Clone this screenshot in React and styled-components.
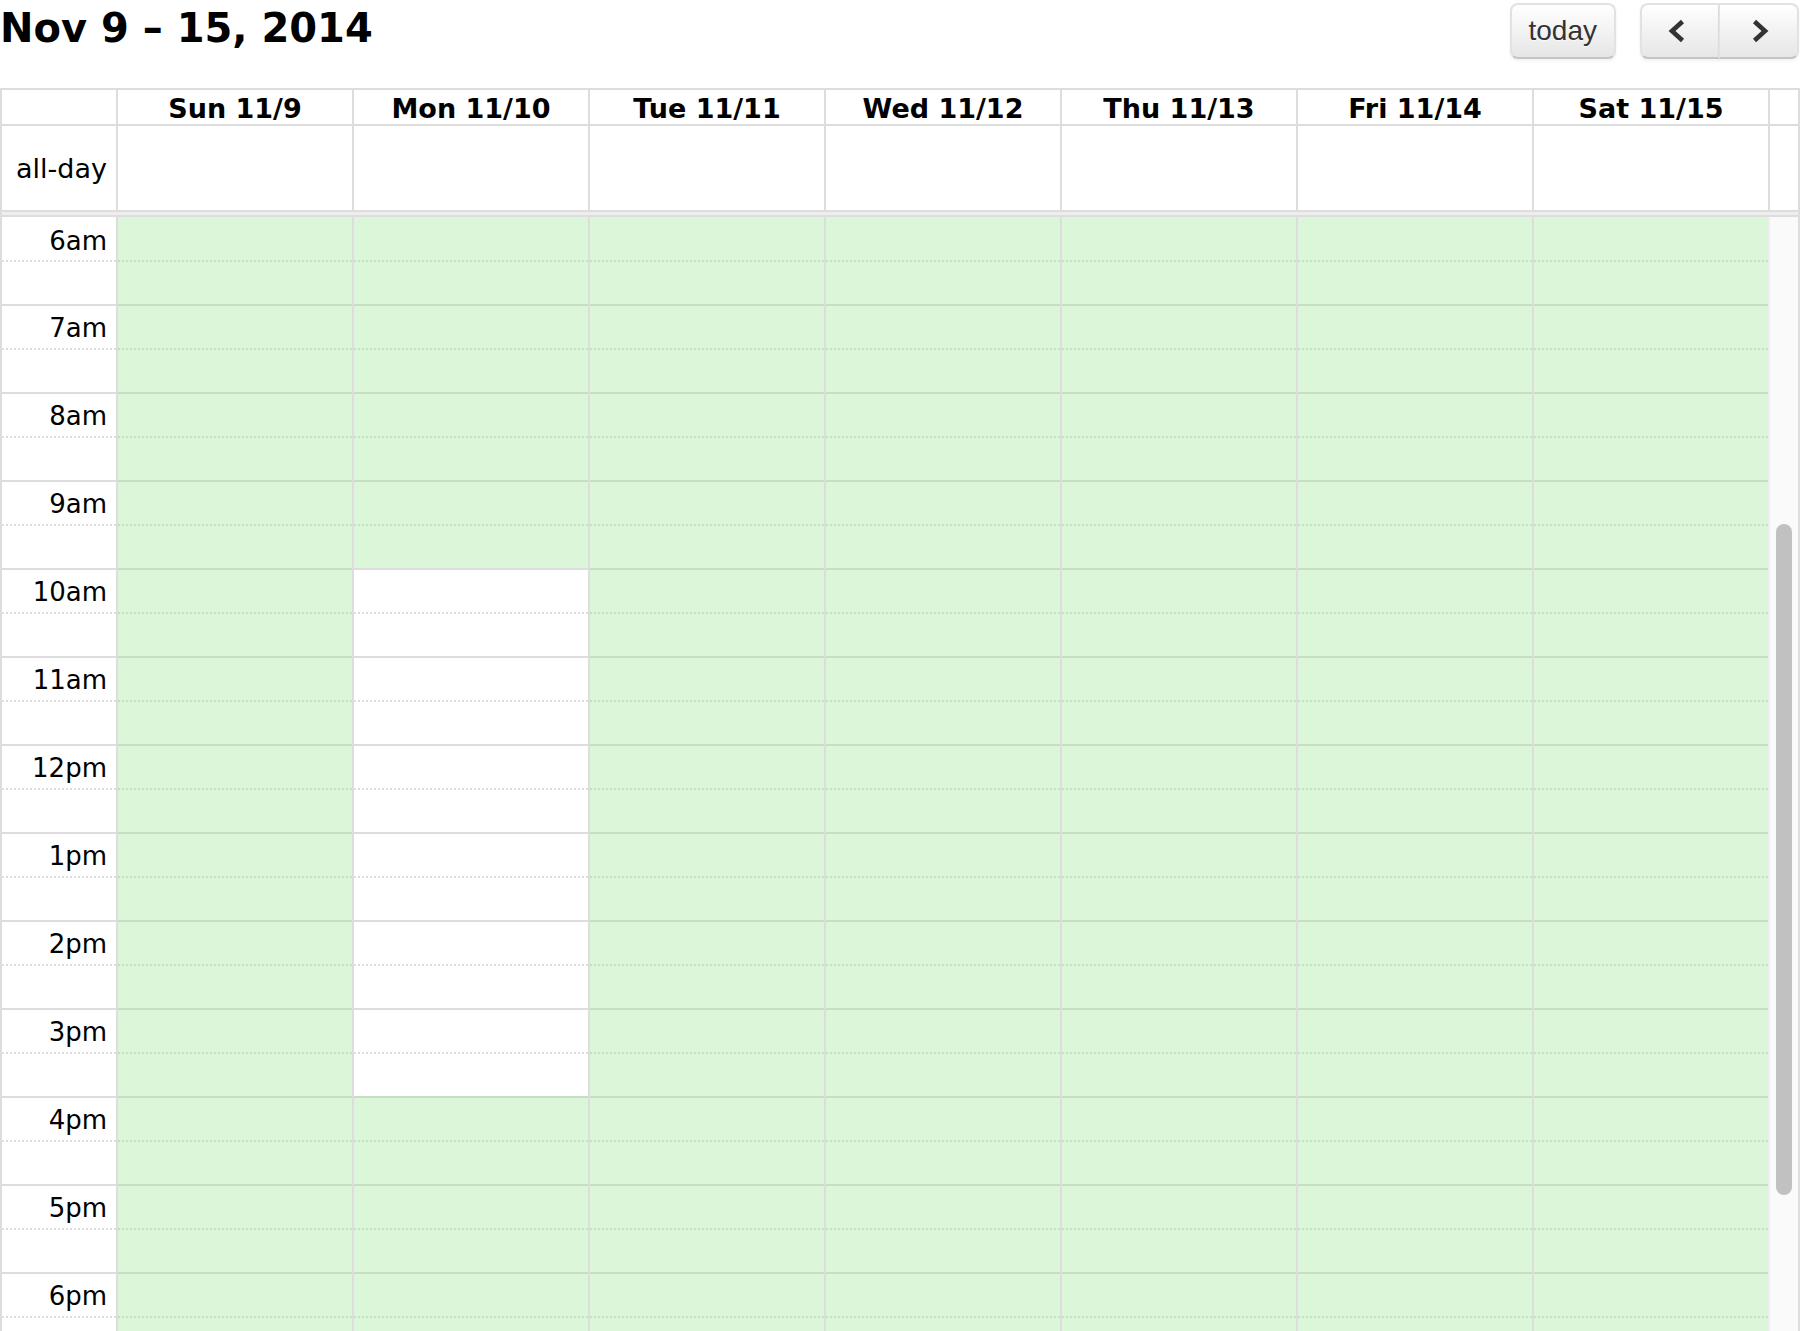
import React from "react";
import styled, { createGlobalStyle } from "styled-components";

const GlobalStyle = createGlobalStyle`
  * {
    box-sizing: border-box;
  }
  body {
    margin: 0;
    background: #fff;
    font-family: "DejaVu Sans", Verdana, sans-serif;
    color: #000;
    overflow: hidden;
  }
`;

const LINE = "#dddddd";
const GREEN = "#dcf6d9";
const GREEN_LINE = "#c6dec3";

const days = ["Sun 11/9", "Mon 11/10", "Tue 11/11", "Wed 11/12", "Thu 11/13", "Fri 11/14", "Sat 11/15"];

const hours = [];
for (let h = 6; h <= 18; h++) {
  const suffix = h < 12 ? "am" : "pm";
  const n = h % 12 === 0 ? 12 : h % 12;
  hours.push(n + suffix);
}
const slotCount = hours.length * 2;

// Mon is free (white) from 10am to 4pm
const isFree = (day, slot) => day === 1 && slot >= 8 && slot < 20;

const Calendar = styled.div`
  height: 100vh;
  display: flex;
  flex-direction: column;
`;

const Toolbar = styled.div`
  height: 88px;
  flex: none;
  display: flex;
  justify-content: space-between;
  align-items: flex-start;
  padding-right: 1px;
`;

const Title = styled.h2`
  margin: 0;
  padding-top: 8px;
  font-size: 40px;
  line-height: 40px;
  font-weight: bold;
`;

const Buttons = styled.div`
  display: flex;
  gap: 24px;
  padding-top: 3px;
`;

const Button = styled.button`
  height: 56px;
  padding: 0 17px;
  min-width: ${(p) => (p.$icon ? "80px" : "auto")};
  display: flex;
  align-items: center;
  justify-content: center;
  font-family: "Liberation Sans", Arial, sans-serif;
  font-size: 28px;
  line-height: 52px;
  color: #333;
  background-color: #f5f5f5;
  background-image: linear-gradient(to bottom, #ffffff, #e6e6e6);
  border: 2px solid;
  border-color: #e2e2e2 #e2e2e2 #c4c4c4;
  border-radius: 8px;
  box-shadow: inset 0 2px 0 rgba(255, 255, 255, 0.2), 0 2px 3px rgba(0, 0, 0, 0.06);
  text-shadow: 0 1px 1px rgba(255, 255, 255, 0.75);
  cursor: pointer;
`;

const Group = styled.div`
  display: flex;

  & > ${Button}:first-child {
    border-top-right-radius: 0;
    border-bottom-right-radius: 0;
  }
  & > ${Button}:last-child {
    border-top-left-radius: 0;
    border-bottom-left-radius: 0;
    border-left-width: 1px;
    margin-left: -1px;
  }
`;

const View = styled.div`
  flex: 1;
  min-height: 0;
  display: flex;
  flex-direction: column;
  border: 2px solid ${LINE};
  border-bottom: none;
`;

const Row = styled.div`
  display: flex;
  flex: none;
  height: ${(p) => p.$height}px;
  border-bottom: ${(p) => (p.$line ? `2px solid ${LINE}` : "none")};
`;

const AxisCell = styled.div`
  width: 116px;
  flex: none;
  border-right: 2px solid ${LINE};
  text-align: right;
  padding: ${(p) => p.$pad || 0}px 9px 0 0;
  font-size: 27px;
  line-height: 30px;
`;

const DayHead = styled.div`
  width: 236px;
  flex: none;
  border-right: 2px solid ${LINE};
  text-align: center;
  font-weight: bold;
  font-size: 27px;
  line-height: 30px;
  padding-top: 4px;
`;

const DayCell = styled.div`
  width: 236px;
  flex: none;
  border-right: 2px solid ${LINE};
`;

const Gutter = styled.div`
  flex: 1;
`;

const Divider = styled.div`
  flex: none;
  height: 7px;
  background: #eeeeee;
  border-top: 2px solid ${LINE};
  border-bottom: 2px solid ${LINE};
`;

const Body = styled.div`
  flex: 1;
  min-height: 0;
  display: flex;
  overflow: hidden;
`;

const Column = styled.div`
  width: ${(p) => (p.$axis ? 116 : 236)}px;
  flex: none;
  border-right: 2px solid ${(p) => (p.$last ? "#eeeeee" : LINE)};
`;

const Slot = styled.div`
  height: ${(p) => (p.$first ? 43 : 44)}px;
  background-color: ${(p) => (p.$green ? GREEN : "#fff")};
  border-top: ${(p) => (p.$first ? 0 : 2)}px solid
    ${(p) => (p.$half ? "transparent" : p.$green ? GREEN_LINE : LINE)};
  background-image: ${(p) =>
    p.$half
      ? `repeating-linear-gradient(to right, ${p.$green ? GREEN_LINE : LINE} 0 2px, transparent 2px 4px)`
      : "none"};
  background-origin: border-box;
  background-size: 100% 2px;
  background-repeat: no-repeat;
`;

const TimeLabel = styled.div`
  text-align: right;
  padding: ${(p) => (p.$first ? 9 : 7)}px 9px 0 0;
  font-size: 26px;
  line-height: 30px;
`;

const Track = styled.div`
  flex: 1;
  background: #fafafa;
  display: flex;
  justify-content: center;
`;

const Thumb = styled.div`
  width: 16px;
  height: 671px;
  margin-top: 307px;
  border-radius: 8px;
  background: #c1c1c1;
`;

const Chevron = ({ dir }) => (
  <svg width="20" height="24" viewBox="0 0 20 24" style={{ marginLeft: dir === "left" ? -6 : 2 }}>
    <polyline
      points={dir === "left" ? "15.5,2.5 5,12 15.5,21.5" : "4.5,2.5 15,12 4.5,21.5"}
      fill="none"
      stroke="#333"
      strokeWidth="4.6"
    />
  </svg>
);

export default function App() {
  const slots = Array.from({ length: slotCount }, (_, i) => i);

  return (
    <>
      <GlobalStyle />
      <Calendar>
        <Toolbar>
          <Title>Nov 9 – 15, 2014</Title>
          <Buttons>
            <Button>today</Button>
            <Group>
              <Button $icon>
                <Chevron dir="left" />
              </Button>
              <Button $icon>
                <Chevron dir="right" />
              </Button>
            </Group>
          </Buttons>
        </Toolbar>

        <View>
          <Row $height={36} $line>
            <AxisCell />
            {days.map((d) => (
              <DayHead key={d}>{d}</DayHead>
            ))}
            <Gutter />
          </Row>

          <Row $height={84}>
            <AxisCell $pad={28}>all-day</AxisCell>
            {days.map((d) => (
              <DayCell key={d} />
            ))}
            <Gutter />
          </Row>

          <Divider />

          <Body>
            <Column $axis>
              {slots.map((i) => (
                <Slot key={i} $first={i === 0} $half={i % 2 === 1}>
                  {i % 2 === 0 && <TimeLabel $first={i === 0}>{hours[i / 2]}</TimeLabel>}
                </Slot>
              ))}
            </Column>
            {days.map((d, di) => (
              <Column key={d} $last={di === days.length - 1}>
                {slots.map((i) => (
                  <Slot key={i} $first={i === 0} $half={i % 2 === 1} $green={!isFree(di, i)} />
                ))}
              </Column>
            ))}
            <Track>
              <Thumb />
            </Track>
          </Body>
        </View>
      </Calendar>
    </>
  );
}
